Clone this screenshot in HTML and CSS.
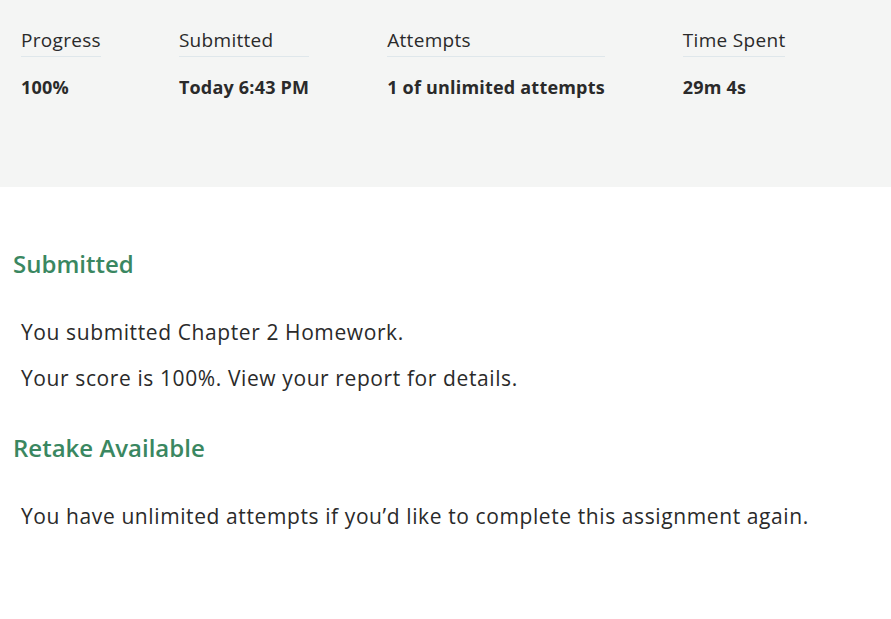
FILE: index.html
```html
<!DOCTYPE html>
<html lang="en">
<head>
    <meta charset="UTF-8">
    <meta name="viewport" content="width=device-width, initial-scale=1.0">
    <title>Chapter 2 Homework</title>
    <link rel="stylesheet" href="styles.css">
</head>
<body>
    <div class="summary">
        <div class="stat">
            <div class="stat-label">Progress</div>
            <div class="stat-value">100%</div>
        </div>
        <div class="stat">
            <div class="stat-label">Submitted</div>
            <div class="stat-value">Today 6:43 PM</div>
        </div>
        <div class="stat">
            <div class="stat-label">Attempts</div>
            <div class="stat-value">1 of unlimited attempts</div>
        </div>
        <div class="stat">
            <div class="stat-label">Time Spent</div>
            <div class="stat-value">29m 4s</div>
        </div>
    </div>

    <div class="content">
        <h2>Submitted</h2>
        <p class="first">You submitted Chapter 2 Homework.</p>
        <p>Your score is 100%. View your report for details.</p>

        <h2>Retake Available</h2>
        <p class="first">You have unlimited attempts if you’d like to complete this assignment again.</p>
    </div>
</body>
</html>
```

FILE: styles.css
```css
body {
    margin: 0;
    font-family: "Open Sans", Lato, sans-serif;
    color: #2a2a2a;
    background: #fff;
}

.summary {
    display: flex;
    gap: 78px;
    align-items: flex-start;
    height: 187px;
    box-sizing: border-box;
    padding: 28px 21px 0;
    background: #f4f5f4;
}

.stat-label {
    font-size: 19px;
    line-height: 24px;
    letter-spacing: 0.3px;
    padding-bottom: 4px;
    border-bottom: 1px solid #dfe7eb;
}

.stat-value {
    margin-top: 18px;
    font-size: 18px;
    font-weight: bold;
    line-height: 24px;
    letter-spacing: 0.2px;
}

.content {
    padding: 62px 13px 0;
}

h2 {
    margin: 0;
    font-size: 24px;
    font-weight: 600;
    line-height: 30px;
    color: #3a8761;
}

p {
    margin: 0 0 0 8px;
    font-size: 21px;
    line-height: 26px;
    letter-spacing: 0.6px;
    margin-top: 20px;
}

p + h2 {
    margin-top: 42px;
}

h2 + p.first {
    margin-top: 40px;
}
```
